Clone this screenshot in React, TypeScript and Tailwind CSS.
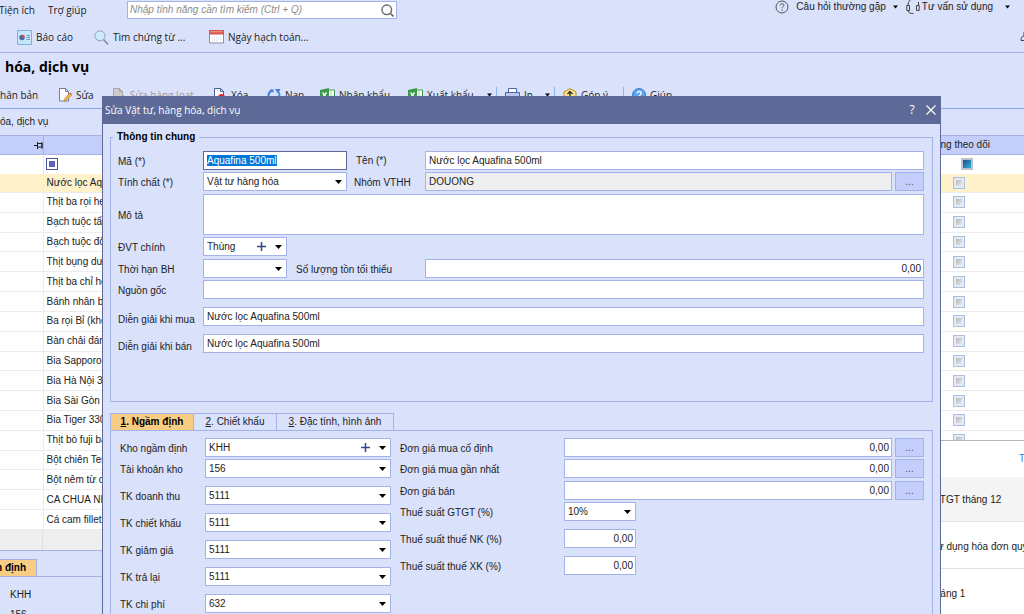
import clsx from "clsx";
import React, { useEffect, useRef } from "react";

interface ToolbarItem {
  label: string;
  icon?: React.ReactNode;
  className: string;
  hasMenu?: boolean;
  hasSeparator?: boolean;
  disabled?: boolean;
}

const PRODUCTS = [
  "Nước lọc Aqua",
  "Thịt ba rọi heo",
  "Bạch tuộc tẩm",
  "Bạch tuộc đông",
  "Thịt bụng dưới",
  "Thịt ba chỉ heo",
  "Bánh nhân bắp",
  "Ba rọi Bỉ (không)",
  "Bàn chải đánh",
  "Bia Sapporo",
  "Bia Hà Nội 330",
  "Bia Sài Gòn",
  "Bia Tiger 330",
  "Thịt bò fuji ba",
  "Bột chiên Tem",
  "Bột nêm từ cá",
  "CA CHUA NHA",
  "Cá cam fillet",
];

const ACCOUNTS = [
  { id: "revenue", label: "TK doanh thu", value: "5111" },
  { id: "discount", label: "TK chiết khấu", value: "5111" },
  { id: "reduction", label: "TK giảm giá", value: "5111" },
  { id: "returned", label: "TK trả lại", value: "5111" },
  { id: "cost", label: "TK chi phí", value: "632" },
];

const PRICES = [
  { id: "fixed-price", label: "Đơn giá mua cố định", className: "" },
  { id: "latest-price", label: "Đơn giá mua gần nhất", className: "mt-[2px]" },
  { id: "sale-price", label: "Đơn giá bán", className: "mt-[3px]" },
];

const fieldClass =
  "h-[19px] min-w-0 rounded-none border border-[#a3b3ea] bg-white px-[3px] text-[10px] leading-4 text-[#222] outline-none";

const Caret = ({ className }: { className?: string }) => (
  <svg
    viewBox="0 0 7 4"
    className={clsx("h-1 w-[7px] shrink-0 fill-black", className)}
  >
    <path d="M0 0h7L3.5 4z" />
  </svg>
);

const EditIcon = () => (
  <svg viewBox="0 0 14 14" className="h-3.5 w-3.5 shrink-0">
    <path d="M1.5.5h6l3 3v9.500h-9z" fill="#fff" stroke="#6d7d9f" />
    <path d="M7.500.5v3h3" fill="none" stroke="#6d7d9f" />
    <path d="M6 13l.8-2.600L11.500 5.500l1.900 1.800L8.600 12.200z" fill="#f2b03d" stroke="#a9772b" strokeWidth=".5" />
    <path d="M11.500 5.500l1-1 1.500 1.500-.7 1.200z" fill="#d96a5b" />
  </svg>
);

const BulkEditIcon = () => (
  <svg viewBox="0 0 14 14" className="h-3.5 w-3.5 shrink-0">
    <path d="M1.500.5h6l3 3v9.500h-9z" fill="#ccc" stroke="#a5a5aa" />
    <path d="M7.500.5v3h3M6 12l5-5 2 2-5 4z" fill="#bbb" stroke="#a5a5aa" />
  </svg>
);

const DeleteIcon = () => (
  <svg viewBox="0 0 14 14" className="h-3.5 w-3.5 shrink-0">
    <path d="M1.500.5h6l3 3v9.500h-9z" fill="#fff" stroke="#4d5f96" />
    <path d="M7.500.5v3h3" fill="none" stroke="#4d5f96" />
    <circle cx="8.500" cy="9.500" r="3.500" fill="#e2232b" />
  </svg>
);

const ReloadIcon = () => (
  <svg viewBox="0 0 14 14" className="h-3.5 w-3.5 shrink-0" fill="none" strokeWidth="2">
    <path d="M5.500 2.500A5 5 0 0 0 3 11" stroke="#3f7fd8" />
    <path d="M8 11.800A5 5 0 0 0 11.500 4" stroke="#3f9ae8" />
    <path d="M2.500 1.500h4v3.500zM8 1h5.500L11 5.500z" fill="#3f7fd8" />
  </svg>
);

const ExcelIcon = () => (
  <svg viewBox="0 0 15 14" className="h-3.5 w-[15px] shrink-0">
    <path d="M8 2h6.500v10H8z" fill="#fff" stroke="#3b9a4c" />
    <path d="M11 2v10" stroke="#9ccfa5" />
    <path d="M0 2l9-2v14l-9-2z" fill="#3b9a4c" />
    <path d="M2.500 4.500l4 5M6.500 4.500l-4 5" stroke="#fff" strokeWidth="1.300" />
  </svg>
);

const PrintIcon = () => (
  <svg viewBox="0 0 15 14" className="h-3.5 w-[15px] shrink-0" stroke="#5163a8">
    <path d="M3.500 5V.5h8V5" fill="#fff" />
    <path d="M.5 4.500h14v6H.5z" fill="#b9c6f0" />
    <path d="M3.500 8.500h8v5h-8z" fill="#fff" />
  </svg>
);

const FeedbackIcon = () => (
  <svg viewBox="0 0 14 14" className="h-3.5 w-3.5 shrink-0">
    <path d="M7 .6l6 3.200v6.400l-6 3.200-6-3.200V3.800z" fill="#ffe28a" stroke="#b5913c" />
    <path d="M7 11V4M4.500 6L7 3.500 9.500 6" fill="none" stroke="#333" strokeWidth="1.400" />
  </svg>
);

const HelpIcon = () => (
  <svg viewBox="0 0 14 14" className="h-3.5 w-3.5 shrink-0">
    <circle cx="7" cy="7" r="6.500" fill="#5ba3ee" stroke="#3c7fce" />
    <path d="M5 5.500c0-2.800 4.200-2.500 4.200-.2C9.200 6.800 7 7 7 8.500M7 10v1.300" fill="none" stroke="#fff" strokeWidth="1.300" />
  </svg>
);

const ReportIcon = () => (
  <svg viewBox="0 0 15 15" className="h-[15px] w-[15px] shrink-0">
    <path d="M.5.5h14v14H.5z" fill="#c8e6fb" stroke="#79b4de" />
    <circle cx="5" cy="7.500" r="2.700" fill="#3f6fb5" />
    <path d="M5 7.500V4.800A2.700 2.700 0 0 1 7.700 7.500z" fill="#e04a3f" />
    <path d="M9.500 5.500h3.500M9.500 7.500h3.500M9.500 9.500h3.500" stroke="#5b82b5" strokeWidth=".8" />
  </svg>
);

const VoucherIcon = () => (
  <svg viewBox="0 0 15 15" className="h-[15px] w-[15px] shrink-0">
    <circle cx="6" cy="5.800" r="5" fill="#cfeafa" stroke="#8ea6bd" />
    <path d="M9.500 9.500l4.500 4.800" stroke="#7f92a8" strokeWidth="1.800" />
  </svg>
);

const CalendarIcon = () => (
  <svg viewBox="0 0 15 14" className="h-3.5 w-[15px] shrink-0">
    <path d="M.5.5h14v12.500H.5z" fill="#fff" stroke="#8d8f9d" />
    <path d="M0 0h15v4.500H0z" fill="#d9534a" />
    <path d="M1 1.800h13" stroke="#f3a39c" />
    <path d="M3 7h9M3 9h9M3 11h6" stroke="#d5d5da" strokeWidth=".8" strokeDasharray="1 1" />
  </svg>
);

const TOOLBAR: ToolbarItem[] = [
  { label: "Sửa", icon: <EditIcon />, className: "w-[54px]" },
  {
    label: "Sửa hàng loạt",
    icon: <BulkEditIcon />,
    className: "w-[101px]",
    disabled: true,
  },
  { label: "Xóa", icon: <DeleteIcon />, className: "w-[54px]" },
  { label: "Nạp", icon: <ReloadIcon />, className: "w-[53px]" },
  { label: "Nhập khẩu", icon: <ExcelIcon />, className: "w-[88px]" },
  {
    label: "Xuất khẩu",
    icon: <ExcelIcon />,
    className: "w-[97px]",
    hasMenu: true,
    hasSeparator: true,
  },
  {
    label: "In",
    icon: <PrintIcon />,
    className: "w-[58px]",
    hasMenu: true,
    hasSeparator: true,
  },
  {
    label: "Góp ý",
    icon: <FeedbackIcon />,
    className: "w-[69px]",
    hasSeparator: true,
  },
  { label: "Giúp", icon: <HelpIcon />, className: "w-[54px]" },
];

interface DropdownProps {
  id: string;
  value: string;
  className?: string;
  hasAdd?: boolean;
}

const Dropdown: React.FC<DropdownProps> = ({
  id,
  value,
  className,
  hasAdd,
}) => (
  <div className={clsx("relative flex shrink-0", className)}>
    <select
      id={id}
      defaultValue={value}
      className={clsx(fieldClass, "w-full appearance-none")}
    >
      <option value={value}>{value}</option>
    </select>
    {hasAdd && (
      <button
        type="button"
        aria-label="Thêm"
        className="absolute top-1 right-5 flex h-[11px] w-[11px] items-center justify-center"
      >
        <svg viewBox="0 0 9 9" className="h-[9px] w-[9px]">
          <path d="M4.500 0v9M0 4.500h9" stroke="#34478c" strokeWidth="1.500" />
        </svg>
      </button>
    )}
    <Caret className="pointer-events-none absolute top-2 right-[5px]" />
  </div>
);

interface TextFieldProps {
  id: string;
  value?: string;
  className?: string;
  readOnly?: boolean;
}

const TextField: React.FC<TextFieldProps> = ({
  id,
  value = "",
  className,
  readOnly,
}) => (
  <input
    id={id}
    type="text"
    defaultValue={value}
    readOnly={readOnly}
    className={clsx(fieldClass, readOnly && "bg-[#eee]!", className)}
  />
);

const MoreButton = () => (
  <button
    type="button"
    aria-label="Chọn"
    className="ml-[3px] h-[19px] w-[29px] shrink-0 border border-[#a3b3ea] bg-[#c3cefa] text-[10px] leading-4 text-[#555]"
  >
    ...
  </button>
);

interface FieldRowProps {
  id: string;
  label: string;
  className?: string;
  labelClassName?: string;
  children: React.ReactNode;
}

const FieldRow: React.FC<FieldRowProps> = ({
  id,
  label,
  className,
  labelClassName = "w-[85px] pt-0.5",
  children,
}) => (
  <div className={clsx("flex items-center", className)}>
    <label htmlFor={id} className={clsx("shrink-0 leading-3", labelClassName)}>
      {label}
    </label>
    {children}
  </div>
);

const TopBars = () => (
  <header className="font-['Open_Sans',sans-serif]">
    <div className="flex h-5 items-center">
      <a href="#tools" className="-ml-px w-[49px] shrink-0">
        Tiện ích
      </a>
      <a href="#help" className="w-[79px] shrink-0">
        Trợ giúp
      </a>
      <div className="flex h-[18px] w-[270px] shrink-0 items-center border border-[#a3b3ea] bg-white pr-0.5">
        <input
          type="search"
          aria-label="Tìm kiếm tính năng"
          placeholder="Nhập tính năng cần tìm kiếm (Ctrl + Q)"
          className="min-w-0 flex-1 px-0.5 font-['Liberation_Sans',sans-serif] italic outline-none placeholder:text-[#8b8b8b]"
        />
        <svg viewBox="0 0 13 13" className="h-[13px] w-[13px]" fill="none" stroke="#666">
          <circle cx="5.800" cy="5.800" r="4.800" strokeWidth="1.400" />
          <path d="M9.500 9.500l3 3" strokeWidth="1.600" />
        </svg>
      </div>
      <div className="ml-auto flex h-full items-start font-['Liberation_Sans',sans-serif]">
        <button type="button" className="flex h-[13px] items-center">
          <svg viewBox="0 0 14 14" className="mr-[7px] h-3.5 w-3.5" fill="none" stroke="#555">
            <circle cx="7" cy="7" r="6" />
            <path d="M5.200 5.500c0-2.400 3.700-2.300 3.700-.2C8.900 6.700 7 6.800 7 8.300M7 9.500v1.200" />
          </svg>
          Câu hỏi thường gặp
          <Caret className="ml-[7px] w-[5px]!" />
        </button>
        <button type="button" className="ml-2 mr-3.5 flex h-[13px] items-center">
          <svg viewBox="0 0 14 14" className="mr-0.5 h-3.5 w-3.5" fill="none" stroke="#444">
            <path d="M2 5C2 1.500 4 0 4.500 0M.8 5.500h2.700v5H.8zM10.500 5.500h2.700v5h-2.700zM12.500 5V2M2.500 11c0 2 2 2.500 5 2.500" />
          </svg>
          Tư vấn sử dụng
          <Caret className="ml-3 w-[5px]!" />
        </button>
      </div>
    </div>
    <div className="flex h-[33px] items-center border-b border-[#a3b3ea] pt-0.5 pl-[17px]">
      <button type="button" className="flex w-[77px] items-center gap-1">
        <ReportIcon />
        Báo cáo
      </button>
      <button type="button" className="flex w-[115px] items-center gap-1">
        <VoucherIcon />
        Tìm chứng từ ...
      </button>
      <button type="button" className="flex items-center gap-1">
        <CalendarIcon />
        Ngày hạch toán...
      </button>
      <svg viewBox="0 0 8 10" className="ml-auto -mr-1 h-2.5 w-2" fill="none" stroke="#444">
        <path d="M4 0v4M1 8.500c0-3 1-4.500 3-4.500s3 1.500 3 4.500z" />
      </svg>
    </div>
    <h1 className="pt-1 pl-[5px] text-sm leading-5 font-bold text-black">
      hóa, dịch vụ
    </h1>
    <nav className="flex h-8 items-center border-b border-[#8fa3ea] pt-1">
      <button type="button" className="w-[58px] shrink-0 text-left">
        hân bản
      </button>
      {TOOLBAR.map((item) => (
        <button
          key={item.label}
          type="button"
          disabled={item.disabled}
          className={clsx(
            "flex shrink-0 items-center gap-1 whitespace-nowrap",
            item.className,
            item.disabled && "text-[#999]",
          )}
        >
          {item.icon}
          {item.label}
          {item.hasSeparator && (
            <span className="mr-2 ml-auto flex items-center gap-1">
              {item.hasMenu && <Caret className="w-[5px]!" />}
              <span className="h-4 w-px bg-[#8fb4ea]" />
            </span>
          )}
        </button>
      ))}
    </nav>
  </header>
);

const ProductTable = () => (
  <table className="h-[395px] w-full table-fixed border-collapse bg-white text-left">
    <thead>
      <tr className="h-[19px] bg-[#c3cefa]">
        <th className="w-[43px] border-y border-r border-[#a3b3ea] p-0" aria-label="Ghim">
          <svg viewBox="0 0 9 7" className="ml-auto h-[7px] w-[9px]" fill="none" stroke="#222">
            <path d="M0 3.500h3M3.500 0v7M3.500 1.500h4.500v3.500h-4.500M8 0v7" />
          </svg>
        </th>
        <th className="border-y border-[#a3b3ea] p-0" aria-label="Tên" />
        <th className="w-[130px] border-y border-[#a3b3ea] p-0 pl-[27px] font-normal">
          Ngừng theo dõi
        </th>
      </tr>
      <tr className="h-[19px]">
        <td className="border-r border-[#e6e6ea] p-0" />
        <td className="p-0 pl-[2px]">
          <span className="flex h-3 w-3 items-center justify-center border border-[#4a5596] bg-white">
            <span className="h-1.5 w-1.5 bg-[#5b5fc7]" />
          </span>
        </td>
        <td className="p-0 pl-[67px]">
          <span className="flex h-3 w-3 border-2 border-[#b9c3cc] bg-linear-to-br from-[#1c4f86] to-[#37b3dd]" />
        </td>
      </tr>
    </thead>
    <tbody>
      {PRODUCTS.map((name, index) => (
        <tr
          key={name}
          className={clsx(
            "border-b border-[#ececec]",
            index === 0 && "bg-[#fff1c9]",
          )}
        >
          <td className="border-r border-[#ececec] p-0" />
          <td className="p-0 pl-[3px] leading-3 whitespace-nowrap">{name}</td>
          <td className="p-0">
            <input
              type="checkbox"
              aria-label={name}
              className="mx-auto block h-3 w-3 appearance-none border border-[#a9bfe0] bg-linear-to-br from-[#a8a8ac] to-[#fafafa] ring-2 ring-[#e6ebf3] ring-inset"
            />
          </td>
        </tr>
      ))}
    </tbody>
  </table>
);

const ReminderPanel = () => (
  <aside className="absolute right-0 bottom-0 h-[174px] w-[92px] overflow-hidden border-t border-[#b5b5b5] bg-white whitespace-nowrap">
    <div className="flex h-9 items-center justify-end">
      <a href="#all" className="-mr-px text-[#2f80d8]">
        T
      </a>
    </div>
    <p className="flex h-[45px] items-center border-b border-[#e2e2e2] bg-[#f4f4f4] pt-0.5">
      GTGT tháng 12
    </p>
    <p className="flex h-[47px] items-center border-b border-[#e2e2e2] pt-1">
      sử dụng hóa đơn quý
    </p>
    <p className="flex h-[47px] items-center pt-0.5">tháng 1</p>
  </aside>
);

const DetailTabs = () => (
  <section className="border-t border-[#a3b3ea] pt-2">
    <div className="flex h-[18px] border-b border-[#a3b3ea]">
      <button
        type="button"
        className="flex w-[37px] items-center justify-end border-t border-r border-[#a3b3ea] bg-[#f7cd84] pr-[10px] font-bold whitespace-nowrap text-black"
      >
        m định
      </button>
    </div>
    <p className="pt-2.5 pl-2.5 leading-4">KHH</p>
    <p className="pt-1 pl-2.5 leading-4">156</p>
  </section>
);

const GeneralInfo = () => {
  const codeRef = useRef<HTMLInputElement>(null);

  useEffect(() => {
    codeRef.current?.focus();
    codeRef.current?.select();
  }, []);

  return (
    <fieldset className="mx-[7px] mt-[5px] border border-[#a3b3ea] pt-1.5 pr-2 pb-12 pl-[7px]">
      <legend className="-ml-[5px] px-1 leading-4 font-bold text-black">
        Thông tin chung
      </legend>
      <FieldRow id="code" label="Mã (*)">
        <input
          id="code"
          ref={codeRef}
          type="text"
          defaultValue="Aquafina 500ml"
          className={clsx(
            fieldClass,
            "w-36 shrink-0 border-[#5d6a97]! selection:bg-[#0078d7] selection:text-white",
          )}
        />
        <label htmlFor="name" className="w-[78px] shrink-0 pl-[9px]">
          Tên (*)
        </label>
        <TextField id="name" value="Nước lọc Aquafina 500ml" className="flex-1" />
      </FieldRow>
      <FieldRow id="kind" label="Tính chất (*)" className="mt-[2px]">
        <Dropdown id="kind" value="Vật tư hàng hóa" className="w-36" />
        <label htmlFor="group" className="w-[78px] shrink-0 pt-0.5 pl-[7px]">
          Nhóm VTHH
        </label>
        <TextField id="group" value="DOUONG" className="flex-1" readOnly />
        <MoreButton />
      </FieldRow>
      <FieldRow id="description" label="Mô tả" className="mt-[3px]">
        <textarea
          id="description"
          className="h-[41px] min-w-0 flex-1 resize-none border border-[#a3b3ea] bg-white px-1 outline-none"
        />
      </FieldRow>
      <FieldRow id="unit" label="ĐVT chính" className="mt-[2px]">
        <Dropdown id="unit" value="Thùng" className="w-[84px]" hasAdd />
      </FieldRow>
      <FieldRow id="warranty" label="Thời hạn BH" className="mt-[3px]">
        <Dropdown id="warranty" value="" className="w-[84px]" />
        <label htmlFor="min-stock" className="w-[138px] shrink-0 pt-0.5 pl-[9px]">
          Số lượng tồn tối thiểu
        </label>
        <TextField id="min-stock" value="0,00" className="flex-1 text-right px-0.5!" />
      </FieldRow>
      <FieldRow id="origin" label="Nguồn gốc" className="mt-[2px]">
        <TextField id="origin" className="flex-1" />
      </FieldRow>
      <FieldRow
        id="buy-note"
        label="Diễn giải khi mua"
        labelClassName="w-[85px] pt-1.5"
        className="mt-2"
      >
        <TextField id="buy-note" value="Nước lọc Aquafina 500ml" className="flex-1" />
      </FieldRow>
      <FieldRow
        id="sell-note"
        label="Diễn giải khi bán"
        labelClassName="w-[85px] pt-1.5"
        className="mt-2"
      >
        <TextField id="sell-note" value="Nước lọc Aquafina 500ml" className="flex-1" />
      </FieldRow>
    </fieldset>
  );
};

const DefaultsTab = () => (
  <div className="mx-[7px] flex flex-1 border-x border-[#a3b3ea] pt-[7px] pr-2 pl-[9px]">
    <div className="w-[271px] shrink-0">
      <FieldRow id="warehouse" label="Kho ngầm định">
        <Dropdown id="warehouse" value="KHH" className="w-[186px]" hasAdd />
      </FieldRow>
      <FieldRow id="stock-account" label="Tài khoản kho" className="mt-[2px]">
        <Dropdown id="stock-account" value="156" className="w-[186px]" />
      </FieldRow>
      {ACCOUNTS.map((account) => (
        <FieldRow
          key={account.id}
          id={account.id}
          label={account.label}
          className="mt-2"
        >
          <Dropdown id={account.id} value={account.value} className="w-[186px]" />
        </FieldRow>
      ))}
    </div>
    <div className="min-w-0 flex-1 pl-[9px]">
      {PRICES.map((price) => (
        <FieldRow
          key={price.id}
          id={price.id}
          label={price.label}
          labelClassName="w-[164px] pt-0.5"
          className={price.className}
        >
          <TextField id={price.id} value="0,00" className="flex-1 text-right px-0.5!" />
          <MoreButton />
        </FieldRow>
      ))}
      <FieldRow
        id="vat"
        label="Thuế suất GTGT (%)"
        labelClassName="w-[164px] pt-0.5"
        className="mt-[2px]"
      >
        <Dropdown id="vat" value="10%" className="w-[72px]" />
      </FieldRow>
      <FieldRow
        id="import-tax"
        label="Thuế suất thuế NK (%)"
        labelClassName="w-[164px] pt-0.5"
        className="mt-2"
      >
        <TextField id="import-tax" value="0,00" className="w-[72px] text-right px-0.5!" />
      </FieldRow>
      <FieldRow
        id="export-tax"
        label="Thuế suất thuế XK (%)"
        labelClassName="w-[164px] pt-0.5"
        className="mt-2"
      >
        <TextField id="export-tax" value="0,00" className="w-[72px] text-right px-0.5!" />
      </FieldRow>
    </div>
  </div>
);

const EditDialog = () => (
  <div
    role="dialog"
    aria-labelledby="dialog-title"
    className="absolute top-24 right-[83px] bottom-0 left-[102px] flex flex-col overflow-hidden border-x border-[#5d6a97] bg-[#dae1fb]"
  >
    <div className="flex h-7 shrink-0 items-center bg-[#5d6a97] pr-1 pl-0.5 font-['Open_Sans',sans-serif] text-white">
      <h2 id="dialog-title">Sửa Vật tư, hàng hóa, dịch vụ</h2>
      <button type="button" aria-label="Trợ giúp" className="ml-auto w-3 text-xs">
        ?
      </button>
      <button type="button" aria-label="Đóng" className="ml-2">
        <svg viewBox="0 0 10 10" className="h-2.5 w-2.5" stroke="#fff" strokeWidth="1.100">
          <path d="M.5.5l9 9M9.500.5l-9 9" />
        </svg>
      </button>
    </div>
    <GeneralInfo />
    <div className="mx-[7px] mt-[11px] flex h-[18px] shrink-0 border-b border-[#a3b3ea]" role="tablist">
      <button
        type="button"
        role="tab"
        className="w-[84px] border-t border-x border-[#a3b3ea] bg-[#f7cd84] font-bold text-black"
      >
        <u>1</u>. Ngầm định
      </button>
      <button type="button" role="tab" className="w-[83px] border-t border-r border-[#a3b3ea]">
        <u>2</u>. Chiết khấu
      </button>
      <button type="button" role="tab" className="w-[117px] border-t border-r border-[#a3b3ea]">
        <u>3</u>. Đặc tính, hình ảnh
      </button>
    </div>
    <DefaultsTab />
  </div>
);

const App: React.FC = () => {
  return (
    <main className="relative h-screen overflow-hidden bg-[#dae1fb] font-['Liberation_Sans',sans-serif] text-[10px] leading-4 text-[#222]">
      <TopBars />
      <p className="h-[26px] pt-[5px]">óa, dịch vụ</p>
      <ProductTable />
      <div className="flex h-5 bg-[#eee]">
        <span className="w-[43px] border-r border-[#ddd]" />
      </div>
      <DetailTabs />
      <ReminderPanel />
      <EditDialog />
    </main>
  );
};

export default App;
